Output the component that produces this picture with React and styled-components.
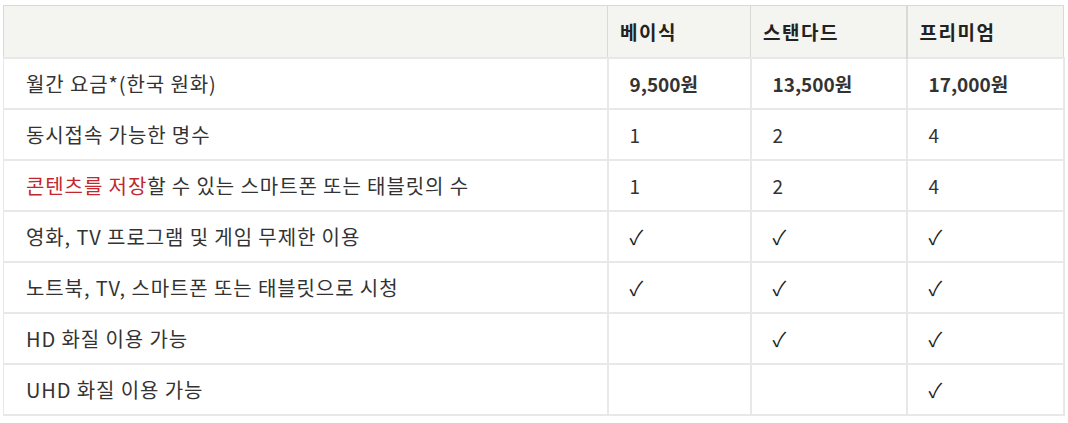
import React from 'react';
import styled, { createGlobalStyle } from 'styled-components';

const Global = createGlobalStyle`
  body { margin: 0; background: #fff; font-family: "Noto Sans CJK KR", "Noto Sans", sans-serif; color: #333; }
`;

const Wrap = styled.div`
  padding: 5px 0 0 3px;
`;

const Table = styled.table`
  width: 1060px; border-collapse: collapse; table-layout: fixed;
  border: 1px solid #d6d6d6;
`;

const Head = styled.th`
  height: 51px; padding: 0 12px; text-align: left; background: #f4f4f0;
  font-size: 19px; font-weight: 700; color: #222; letter-spacing: 1.5px;
  border: 1px solid #d9d9d6;
  border-left-width: ${p => p.thick ? '2px' : '1px'};
`;

const Cell = styled.td`
  height: 49px; padding: 0 ${p => p.label ? '22px' : '21px'}; text-align: left;
  font-size: ${p => p.label ? '20px' : '19px'};
  letter-spacing: ${p => p.label ? '0.9px' : '0'};
  font-weight: ${p => p.bold ? 700 : 400}; color: #333;
  border: 2px solid #e8e8e8;
  border-left-width: ${p => p.thick ? '2px' : '1px'};
`;

const Red = styled.span`
  color: #c1272d;
`;

const Check = styled.span`
  font-family: "Noto Sans CJK KR", sans-serif; font-size: 20px; color: #222;
`;

const C = '✓';

const rows = [
  { label: '월간 요금*(한국 원화)', vals: ['9,500원', '13,500원', '17,000원'], bold: true },
  { label: '동시접속 가능한 명수', vals: ['1', '2', '4'] },
  { label: <><Red>콘텐츠를 저장</Red>할 수 있는 스마트폰 또는 태블릿의 수</>, vals: ['1', '2', '4'] },
  { label: '영화, TV 프로그램 및 게임 무제한 이용', vals: [C, C, C] },
  { label: '노트북, TV, 스마트폰 또는 태블릿으로 시청', vals: [C, C, C] },
  { label: 'HD 화질 이용 가능', vals: ['', C, C] },
  { label: 'UHD 화질 이용 가능', vals: ['', '', C] },
];

export default function App() {
  return (
    <Wrap>
      <Global />
      <Table>
        <colgroup>
          <col style={{ width: 604 }} />
          <col style={{ width: 143 }} />
          <col style={{ width: 156 }} />
          <col style={{ width: 157 }} />
        </colgroup>
        <thead>
          <tr>
            <Head />
            <Head>베이식</Head>
            <Head>스탠다드</Head>
            <Head thick>프리미엄</Head>
          </tr>
        </thead>
        <tbody>
          {rows.map((r, i) => (
            <tr key={i}>
              <Cell label>{r.label}</Cell>
              {r.vals.map((v, j) => (
                <Cell key={j} bold={r.bold} thick={j === 2}>
                  {v === C ? <Check>{C}</Check> : v}
                </Cell>
              ))}
            </tr>
          ))}
        </tbody>
      </Table>
    </Wrap>
  );
}
